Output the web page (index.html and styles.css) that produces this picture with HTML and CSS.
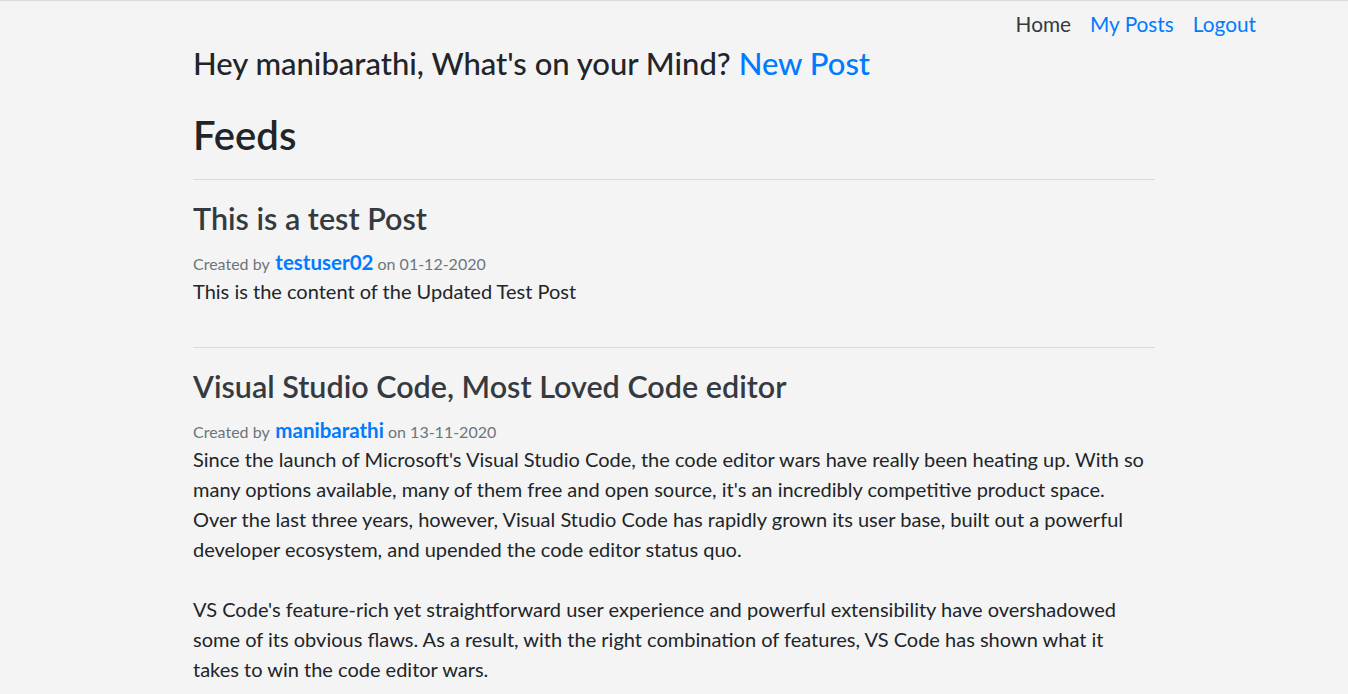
FILE: index.html
```html
<!DOCTYPE html>
<html lang="en">
<head>
<meta charset="utf-8">
<title>Feeds</title>
<link rel="stylesheet" href="styles.css">
</head>
<body>
<nav class="topnav">
  <a class="nav-link active" href="#">Home</a>
  <a class="nav-link" href="#">My Posts</a>
  <a class="nav-link" href="#">Logout</a>
</nav>
<main class="container">
  <h3 class="greeting">Hey manibarathi, What's on your Mind? <a href="#" class="link">New Post</a></h3>
  <h1 class="feeds-title">Feeds</h1>
  <hr class="divider">
  <article class="post">
    <h2 class="post-title">This is a test Post</h2>
    <div class="post-meta">Created by <a href="#" class="author">testuser02</a> on 01-12-2020</div>
    <div class="post-body">
      <p>This is the content of the Updated Test Post</p>
    </div>
  </article>
  <hr class="divider">
  <article class="post">
    <h2 class="post-title">Visual Studio Code, Most Loved Code editor</h2>
    <div class="post-meta">Created by <a href="#" class="author">manibarathi</a> on 13-11-2020</div>
    <div class="post-body">
      <p>Since the launch of Microsoft's Visual Studio Code, the code editor wars have really been heating up. With so many options available, many of them free and open source, it's an incredibly competitive product space. Over the last three years, however, Visual Studio Code has rapidly grown its user base, built out a powerful developer ecosystem, and upended the code editor status quo.</p>
      <p>VS Code's feature-rich yet straightforward user experience and powerful extensibility have overshadowed some of its obvious flaws. As a result, with the right combination of features, VS Code has shown what it takes to win the code editor wars.</p>
    </div>
  </article>
</main>
</body>
</html>
```
FILE: styles.css
```css
html, body {
  margin: 0;
  padding: 0;
}
body {
  background: #f4f4f4;
  border-top: 1px solid #dadada;
  font-family: Lato, "Liberation Sans", sans-serif;
  color: #212529;
  min-height: 693px;
}
a {
  text-decoration: none;
  color: #007bff;
}
.topnav {
  display: flex;
  justify-content: flex-end;
  gap: 19px;
  padding: 10px 92px 0 0;
  font-size: 20.8px;
  line-height: 25px;
}
.nav-link.active {
  color: #343a40;
}
.container {
  width: 962px;
  margin: 0 auto;
}
.greeting {
  margin: 9px 0 0;
  font-size: 31px;
  line-height: 1.2;
  font-weight: 500;
}
.feeds-title {
  margin: 29px 0 0;
  font-size: 40px;
  line-height: 1.2;
  font-weight: 600;
}
.divider {
  margin: 20px 0 0;
  border: 0;
  border-top: 1px solid #d9d9d9;
  height: 0;
}
.post {
  padding-bottom: 21px;
}
.post-title {
  margin: 20px 0 0;
  font-size: 30.5px;
  line-height: 37px;
  font-weight: 600;
  color: #343a40;
}
.post-meta {
  margin-top: 13px;
  font-size: 16px;
  line-height: 24px;
  color: #6c757d;
}
.author {
  margin-left: 2px;
  font-size: 20.5px;
  font-weight: 700;
  line-height: 24px;
}
.post-body {
  font-size: 20px;
  line-height: 30px;
  color: #212529;
}
.post-body p {
  max-width: 958px;
  margin: 0 0 30px;
}
.post-body p:last-child {
  margin-bottom: 0;
}
```
